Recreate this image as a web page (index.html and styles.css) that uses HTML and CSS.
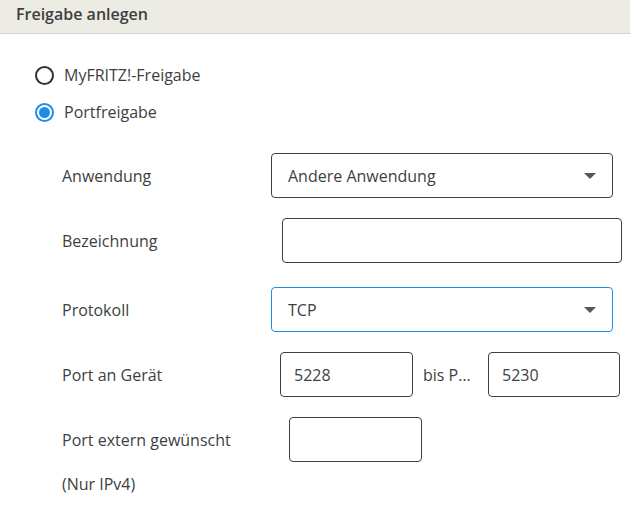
FILE: index.html
```html
<!DOCTYPE html>
<html>
<head>
    <title>Freigabe anlegen</title>
    <link rel="stylesheet" href="styles.css">
</head>
<body>
    <div class="head">
        <h2>Freigabe anlegen</h2>
    </div>
    <div class="content">
        <label class="radio"><span class="dot"></span>MyFRITZ!-Freigabe</label>
        <label class="radio checked"><span class="dot"></span>Portfreigabe</label>

        <div class="form">
            <div class="row">
                <span class="label">Anwendung</span>
                <div class="select">Andere Anwendung<span class="arrow"></span></div>
            </div>
            <div class="row r2">
                <span class="label">Bezeichnung</span>
                <div class="input wide"></div>
            </div>
            <div class="row r3">
                <span class="label">Protokoll</span>
                <div class="select focus">TCP<span class="arrow"></span></div>
            </div>
            <div class="row r4">
                <span class="label">Port an Gerät</span>
                <div class="input port first">5228</div>
                <span class="bis">bis P…</span>
                <div class="input port">5230</div>
            </div>
            <div class="row r5">
                <span class="label">Port extern gewünscht</span>
                <div class="input ext"></div>
            </div>
            <div class="note">(Nur IPv4)</div>
        </div>
    </div>
</body>
</html>
```

FILE: styles.css
```css
body {
    margin: 0;
    font-family: 'Open Sans', sans-serif;
    font-size: 16px;
    color: #3d3f41;
    background: #fff;
}
.head {
    background: #ecebe4;
    border-bottom: 1px solid #d2d2d0;
    height: 33px;
    padding-left: 16px;
}
.head h2 {
    margin: 0;
    font-size: 16px;
    font-weight: 600;
    line-height: 28px;
}
.content {
    padding: 31px 0 0 35px;
}
.radio {
    display: flex;
    align-items: center;
    height: 20px;
    margin-bottom: 17px;
}
.dot {
    box-sizing: border-box;
    width: 19px;
    height: 19px;
    border: 2px solid #2f3133;
    border-radius: 50%;
    margin-right: 10px;
    position: relative;
}
.checked .dot {
    border-color: #1f8ce6;
}
.checked .dot::after {
    content: "";
    position: absolute;
    left: 2px;
    top: 2px;
    width: 11px;
    height: 11px;
    border-radius: 50%;
    background: #1f8ce6;
}
.form {
    padding: 14px 0 0 27px;
}
.row {
    display: flex;
    align-items: center;
    margin-bottom: 20px;
}
.label {
    width: 209px;
    flex: none;
}
.select, .input {
    box-sizing: border-box;
    height: 45px;
    border: 1px solid #3d3f41;
    border-radius: 4px;
    display: flex;
    align-items: center;
}
.select {
    width: 342px;
    padding-left: 16px;
    position: relative;
}
.select.focus {
    border-color: #1f8ce6;
}
.arrow {
    position: absolute;
    right: 16px;
    top: 19px;
    border-left: 6px solid transparent;
    border-right: 6px solid transparent;
    border-top: 6px solid #55575a;
}
.input {
    padding-left: 13px;
}
.input.wide {
    width: 340px;
    margin-left: 11px;
}
.r3 {
    margin-top: 24px;
}
.input.port {
    width: 132px;
}
.input.port.first {
    width: 133px;
    margin-left: 9px;
}
.bis {
    width: 55px;
    margin: 0 10px;
    white-space: nowrap;
    overflow: hidden;
}
.input.ext {
    width: 133px;
    margin-left: 18px;
}
.r5 {
    margin-bottom: 12px;
}
.note {
    line-height: 20px;
}
```
